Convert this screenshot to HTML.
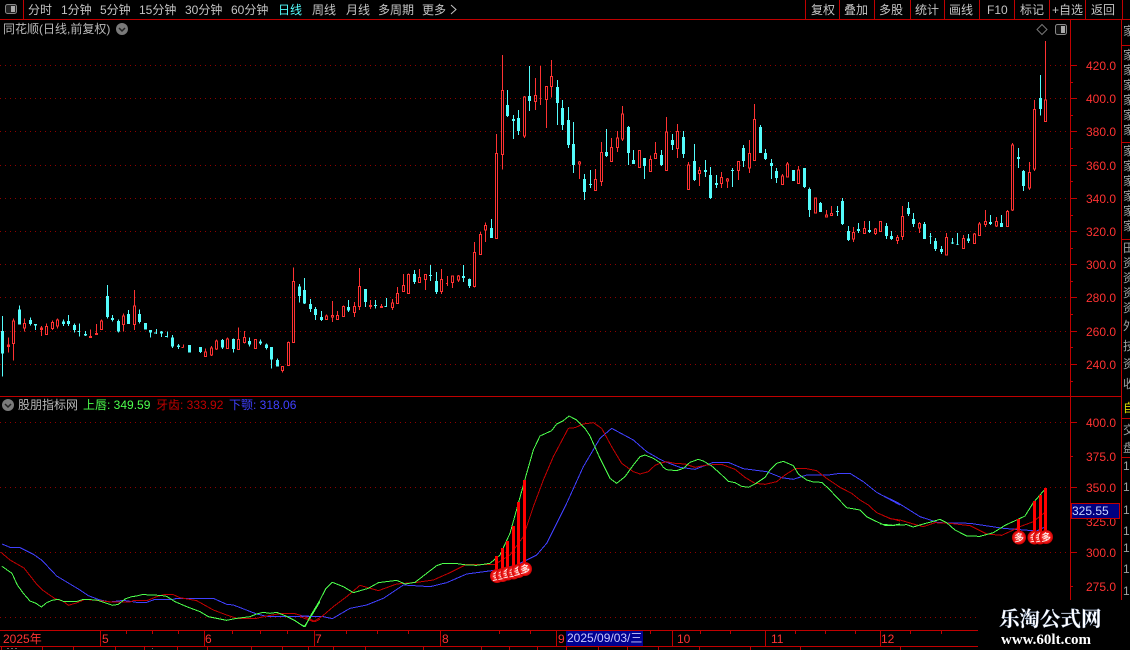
<!DOCTYPE html>
<html lang="zh"><head><meta charset="utf-8"><title>同花顺</title>
<style>
html,body{margin:0;padding:0;background:#000;width:1130px;height:650px;overflow:hidden}
svg{display:block}
text{font-family:"Liberation Sans","WenQuanYi Zen Hei","Noto Sans CJK SC",sans-serif;font-size:12px}
.t{fill:#c4c4c4}
.a{fill:#ff3232;text-anchor:end}
.m{fill:#ff3232}
.s{fill:#a0a0a0}
.k{fill:#fff;text-anchor:middle;font-size:10px}
</style></head><body>
<svg width="1130" height="650" viewBox="0 0 1130 650" xmlns="http://www.w3.org/2000/svg">
<defs><radialGradient id="g"><stop offset="0" stop-color="#ff9a8a"/><stop offset=".7" stop-color="#f01818"/><stop offset="1" stop-color="#c80000"/></radialGradient></defs>
<rect width="1130" height="650" fill="#000"/>

<!-- grid -->
<g stroke="#900000" stroke-width="1" stroke-dasharray="1 4" fill="none" shape-rendering="crispEdges">
<path d="M0 65.5H1068M0 98.5H1068M0 131.5H1068M0 165.5H1068M0 198.5H1068M0 231.5H1068M0 264.5H1068M0 297.5H1068M0 331.5H1068M0 364.5H1068"/>
<path d="M0 422.5H1068M0 487.5H1068M0 552.5H1068M0 617.5H978"/>
</g>

<!-- candles A -->
<g transform="translate(0,260) scale(.333333)" fill="none" shape-rendering="crispEdges">
<path stroke="#ff3232" stroke-width="3" d="M25 232V278M22 255h6v5h-6zM40 175V183M40 250V302M37 183h6V250h-6zM73 175V190M73 204V215M70 190h6V204h-6zM124 198V228M121 204h6v4h-6zM139 190V199M136 199h6V224h-6zM157 182V187M157 205V210M154 187h6V205h-6zM172 175V180M172 198V206M169 180h6V198h-6zM271 208V230M268 229h6v4h-6zM289 192V220M286 220h6v4h-6zM304 178V183M301 183h6V209h-6zM370 160V168M370 193V215M367 168h6V193h-6zM403 90V138M403 193V210M400 138h6V193h-6zM550 253V263M545 263h5M616 265V276M613 276h6V290h-6zM634 258V264M634 285V288M631 264h6V285h-6zM649 238V243M649 267V270M646 243h6V267h-6zM682 232V237M679 237h6V266h-6zM715 202V238M712 238h6V269h-6zM733 213V232M733 248V250M730 232h6V248h-6zM763 238h6V266h-6zM847 331V338M844 319h6V331h-6zM865 245V247M862 247h6V316h-6zM880 22V65M877 65h6V248h-6z"/>
<path stroke="#54fcfc" stroke-width="3" d="M7 168V350M58 136V194M91 172V196M106 192V210M190 178V198M205 165V198M223 190V218M238 190V230M256 213V228M322 75V176M337 165V184M355 178V218M385 150V192M418 148V190M451 210V232M469 207V222M484 213V231M502 215V232M517 225V264M535 252V267M601 261V279M667 237V267M700 235V278M748 232V260M781 238V255M799 250V269M814 261V326M832 295V320M898 72V128M232 214h6M462 219h7M495 230h7"/>
<path stroke="#54fcfc" stroke-width="9" d="M7 213V281M58 148V194M91 180V192M106 192V197M190 184V192M205 183V192M223 195V210M256 222V227M322 108V171M337 174V180M355 183V214M385 162V192M418 162V186M436 189V209M451 210V218M484 215V221M517 232V259M535 257V261M568 255V278M601 261V276M667 240V263M700 237V267M748 243V254M781 245V250M799 254V264M814 261V299M832 300V320M898 80V108"/>
</g>

<!-- candles B -->
<g transform="translate(280,200) scale(.333333)" fill="none" shape-rendering="crispEdges">
<path stroke="#ff3232" stroke-width="3" d="M139 343V348M136 348h6V359h-6zM157 303V346M157 351V366M154 346h6v5h-6zM172 333V346M169 346h6V359h-6zM190 316V319M187 319h6V350h-6zM223 306V319M223 338V351M220 319h6V338h-6zM238 204V259M238 320V330M235 259h6V320h-6zM271 300V316M271 320V327M268 316h6v4h-6zM304 312V319M301 319h6v4h-6zM337 297V309M337 323V330M334 309h6V323h-6zM352 261V280M349 280h6V311h-6zM370 222V256M367 256h6V275h-6zM385 220V223M382 223h6V281h-6zM418 207V232M415 232h6V248h-6zM436 239V270M433 223h6V239h-6zM484 207V238M484 275V282M481 238h6V275h-6zM502 228V258M498 250h4M517 248V264M514 228h6V248h-6zM535 225V228M535 240V246M532 228h6V240h-6zM583 126V157M583 260V263M580 157h6V260h-6zM601 96V103M598 103h6V164h-6zM616 67V76M616 90V126M613 76h6V90h-6z"/>
<path stroke="#54fcfc" stroke-width="3" d="M73 234V312M91 297V336M106 321V360M124 333V363M205 300V336M256 267V321M286 300V325M319 294V321M403 210V252M451 195V243M469 216V282M550 195V246M568 235V264M634 57V114M313 319h6"/>
<path stroke="#54fcfc" stroke-width="9" d="M73 270V310M91 312V327M106 327V345M124 351V360M205 321V331M256 267V306M286 315V318M403 222V246M451 225V228M469 243V276M550 228V234M568 237V258M634 84V114"/>
</g>

<!-- candles C -->
<g transform="translate(460,40) scale(.333333)" fill="none" shape-rendering="crispEdges">
<path stroke="#ff3232" stroke-width="3" d="M109 282V340M106 340h6V596h-6zM127 45V151M127 343V388M124 151h6V343h-6zM193 168V171M193 288V294M190 171h6V288h-6zM226 114V166M226 185V210M223 166h6V185h-6zM241 78V195M238 175h6M259 179V264M256 139h6V179h-6zM274 60V109M274 140V172M271 109h6V140h-6zM358 363V366M358 372V417M355 366h6v6h-6zM406 387V418M403 418h6V452h-6zM424 306V337M424 425V438M421 337h6V425h-6zM454 294V322M451 322h6V365h-6zM472 273V294M472 323V336M469 294h6V323h-6zM487 198V222M487 297V303M484 222h6V297h-6zM535 331h6V383h-6zM571 346V358M568 358h6V395h-6zM586 306V340M583 340h6V356h-6zM619 231V276M616 276h6V392h-6zM652 252V274M652 326V354M649 274h6V326h-6zM685 366V375M682 375h6V449h-6zM718 381V391M718 401V438M715 391h6V401h-6zM784 396V412M784 431V444M781 412h6V431h-6zM802 414V417M802 423V444M799 417h6v6h-6zM835 391V420M832 364h6V391h-6zM868 300V340M868 384V399M865 340h6V384h-6zM883 192V238M880 238h6V362h-6z"/>
<path stroke="#54fcfc" stroke-width="3" d="M142 150V231M160 225V297M175 210V285M208 78V213M292 120V255M307 180V270M325 201V324M340 246V399M373 402V480M391 390V444M439 267V351M505 258V375M520 330V372M553 354V417M604 330V378M637 282V330M670 273V354M703 312V423M736 360V411M751 381V477M769 405V444M817 384V441M850 315V381M901 255V339M916 327V360M934 357V417M949 384V429"/>
<path stroke="#54fcfc" stroke-width="9" d="M142 195V228M160 237V243M175 234V273M208 168V183M292 141V189M307 204V255M325 240V315M340 312V375M373 417V456M391 432V435M439 336V348M505 261V339M520 360V372M553 354V378M604 345V375M637 300V315M670 291V342M703 363V420M736 390V396M751 405V474M769 429V435M817 390V393M850 324V363M901 261V339M916 339V357M934 369V378M949 393V414"/>
</g>

<!-- candles D -->
<g transform="translate(780,90) scale(.333333)" fill="none" shape-rendering="crispEdges">
<path stroke="#ff3232" stroke-width="3" d="M7 252V258M4 258h6V284h-6zM22 216V222M19 222h6V261h-6zM55 228V240M52 240h6V281h-6zM103 324h6V369h-6zM139 360V375M136 375h6v6h-6zM154 348V370M151 370h6v6h-6zM220 411V427M220 447V456M217 427h6V447h-6zM253 393V415M253 430V432M250 415h6V430h-6zM286 414V417M286 431V435M283 417h6V431h-6zM298 394h6V424h-6zM352 435V442M352 451V462M349 442h6V451h-6zM367 348V379M367 440V450M364 379h6V440h-6zM418 396V400M418 414V429M415 400h6V414h-6zM499 429V442M496 442h6V495h-6zM550 435V445M547 445h6V476h-6zM583 429V432M580 432h6V461h-6zM598 396V402M595 402h6V437h-6zM616 360V394M616 404V411M613 394h6V404h-6zM649 381V394M649 408V411M646 394h6V408h-6zM682 360V364M679 364h6V410h-6zM697 159V165M697 360V363M694 165h6V360h-6zM748 216V247M748 294V300M745 247h6V294h-6zM763 30V58M763 237V243M760 58h6V237h-6zM796 -147V30M793 30h6V95h-6z"/>
<path stroke="#54fcfc" stroke-width="3" d="M40 240V273M73 234V294M88 292V381M121 336V366M172 348V378M187 324V405M205 408V453M235 399V429M268 393V429M319 399V447M334 423V450M385 336V378M400 369V411M433 396V447M451 429V462M466 444V483M484 468V492M517 444V462M532 429V465M565 432V459M631 375V405M664 375V411M715 174V234M730 240V303M781 -45V77"/>
<path stroke="#54fcfc" stroke-width="9" d="M40 240V273M73 234V291M88 297V360M121 339V366M172 363V366M187 333V402M205 423V450M235 417V423M268 420V426M319 408V438M334 438V447M385 354V372M400 387V402M433 402V447M451 439V441M466 453V477M484 477V486M517 457V461M532 462V464M565 445V453M631 396V402M664 399V411M715 201V207M730 243V288M781 24V57"/>
</g>

<!-- indicator lines -->
<g fill="none" stroke-width="3" shape-rendering="crispEdges" stroke-linejoin="round">
<g transform="translate(0,500) scale(.333333)">
<polyline stroke="#4040ff" points="6,132 30,142 60,143 100,163 125,180 170,228 200,246 235,267 265,287 300,300 330,306 370,301 410,307 440,307 465,298 520,298 530,295 640,295 680,313 700,315 770,342 800,349 900,349 960,349"/>
<polyline stroke="#c00000" points="3,157 30,180 72,204 108,250 130,272 165,296 190,304 205,316 232,308 255,298 300,302 335,306 390,306 400,302 440,302 470,290 495,283 520,284 540,293 590,302 640,330 680,345 710,355 770,355 800,348 840,341 885,341 915,350 945,365 960,358"/>
<polyline stroke="#4dff4d" points="6,199 36,220 52,255 70,280 90,303 108,310 124,321 140,308 156,301 175,298 190,304 232,304 250,298 290,300 320,310 338,316 355,313 375,297 395,290 410,288 430,283 445,285 480,286 500,289 525,305 560,320 600,335 625,350 650,355 680,361 710,355 750,350 770,342 790,337 810,340 830,337 855,347 885,362 912,380 930,355 945,330 960,305"/>
</g>
<g transform="translate(300,400) scale(.333333)">
<polyline stroke="#4040ff" points="0,648 70,650 97,656 150,625 200,615 250,595 310,555 390,560 440,548 500,522 590,510 650,495 710,465 740,430 800,310 850,200 900,115 935,85 1000,120 1040,155 1080,178"/>
<polyline stroke="#c00000" points="0,650 40,665 65,650 100,620 140,590 180,556 235,572 290,552 350,547 400,540 450,518 500,493 585,493 630,465 670,410 700,320 730,240 760,170 805,85 825,83 850,72 880,68 905,85 935,140 965,190 1000,215 1020,222 1045,215 1065,196 1080,190"/>
<polyline stroke="#4dff4d" points="0,672 15,680 30,650 60,600 78,565 97,547 130,560 160,578 205,565 235,548 290,541 315,552 345,547 380,520 410,497 430,490 465,490 500,495 530,496 570,490 600,465 630,400 655,310 680,220 700,150 720,108 755,92 770,72 790,62 807,48 830,60 855,85 870,108 900,175 930,235 950,250 975,230 1000,195 1020,170 1035,165 1060,175 1080,188"/>
</g>
<g transform="translate(640,430) scale(.333333)">
<polyline stroke="#4040ff" points="60,88 75,95 120,112 165,118 220,97 265,97 310,116 380,125 425,143 460,148 500,135 565,135 600,130 630,130 670,155 710,187 780,225"/>
<polyline stroke="#c00000" points="60,100 80,95 105,100 135,102 165,112 200,105 245,103 285,118 315,142 345,160 375,163 410,155 435,135 465,116 500,116 530,122 560,145 600,172 635,190 660,210 685,225 710,248 750,265 780,273"/>
<polyline stroke="#4dff4d" points="60,97 70,112 80,119 110,122 130,115 150,97 175,88 190,93 215,108 240,130 265,154 285,158 305,169 325,172 345,162 375,142 390,120 410,100 430,94 460,107 475,132 500,150 520,156 545,157 565,175 600,212 620,233 660,240 680,260 710,275 735,286 760,286 780,282"/>
</g>
<g transform="translate(880,380) scale(.333333)">
<polyline stroke="#4040ff" points="0,343 50,366 120,410 175,428 270,430 370,445 470,453 497,440"/>
<polyline stroke="#c00000" points="0,402 30,416 60,420 100,432 130,440 165,428 210,430 270,437 320,462 365,466 400,450 420,440 460,425 497,395"/>
<polyline stroke="#4dff4d" points="0,432 40,436 80,434 100,441 130,432 160,424 180,418 200,428 225,450 260,468 300,469 340,458 375,436 410,420 435,408 460,368 480,345 497,325"/>
</g>
</g>

<!-- signal bars -->
<path fill="none" stroke="#ff0000" stroke-width="3" shape-rendering="crispEdges" d="M496.5 556V576M502.5 548V575M507.5 541V573M513.5 526V572M518.5 502V570M524.5 480V569M1018.5 519V537M1034.5 501V537M1040.5 495V537M1045.5 488V537"/>
<circle cx="497" cy="576" r="7" fill="url(#g)"/><text class="k" x="497" y="580">多</text>
<circle cx="502.5" cy="575" r="7" fill="url(#g)"/><text class="k" x="502.5" y="579">多</text>
<circle cx="507.5" cy="573.5" r="7" fill="url(#g)"/><text class="k" x="507.5" y="577.5">多</text>
<circle cx="513.5" cy="572.5" r="7" fill="url(#g)"/><text class="k" x="513.5" y="576.5">多</text>
<circle cx="518.5" cy="571" r="7" fill="url(#g)"/><text class="k" x="518.5" y="575">多</text>
<circle cx="525" cy="569" r="7" fill="url(#g)"/><text class="k" x="525" y="573">多</text>
<circle cx="1019" cy="537.5" r="7" fill="url(#g)"/><text class="k" x="1019" y="541.5">多</text>
<circle cx="1034.5" cy="537.5" r="7" fill="url(#g)"/><text class="k" x="1034.5" y="541.5">多</text>
<circle cx="1040" cy="537.5" r="7" fill="url(#g)"/><text class="k" x="1040" y="541.5">多</text>
<circle cx="1046" cy="537" r="7" fill="url(#g)"/><text class="k" x="1046" y="541">多</text>

<!-- frame lines -->
<g stroke="#c00000" stroke-width="1" fill="none" shape-rendering="crispEdges">
<path d="M0 19.5H1130"/>
<path d="M23.5 0V19M805.5 0V19M839.5 0V19M874.5 0V19M910.5 0V19M944.5 0V19M979.5 0V19M1014.5 0V19M1049.5 0V19M1085.5 0V19M1122.5 0V19"/>
<path d="M0 396.5H1122M1070.5 20V600M1121.5 20V600"/>
<path d="M1122 45.5H1130M1122 142.5H1130M1122 239.5H1130M1122 418.5H1130M1122 457.5H1130"/>
<path d="M1070 65.5h7M1070 82.5h3M1070 98.5h7M1070 115.5h3M1070 131.5h7M1070 148.5h3M1070 165.5h7M1070 181.5h3M1070 198.5h7M1070 215.5h3M1070 231.5h7M1070 248.5h3M1070 264.5h7M1070 281.5h3M1070 297.5h7M1070 314.5h3M1070 331.5h7M1070 347.5h3M1070 364.5h7M1070 381.5h3"/>
<path d="M1070 422.5h7M1070 487.5h7M1070 552.5h7M1070 456.5h3M1070 586.5h3"/>
<path d="M0 630.5H978M0 646.5H978"/>
<path d="M100.5 630V646M204.5 630V646M314.5 630V646M440.5 630V646M556.5 630V646M672.5 630V646M765.5 630V646M880.5 630V646"/>
<path d="M126.5 631v3M152.5 631v3M178.5 631v3M232.5 631v3M260.5 631v3M287.5 631v3M346.5 631v3M377.5 631v3M408.5 631v3M499.5 631v3M530.5 631v3M650.5 631v3M700.5 631v3M730.5 631v3M795.5 631v3M825.5 631v3M855.5 631v3M910.5 631v3M941.5 631v3"/>
<path d="M1.5 647v3M42.5 647v3M73.5 647v3M115.5 647v3M144.5 647v3M177.5 647v3M207.5 647v3M251.5 647v3M282.5 647v3M308.5 647v3M333.5 647v3M365.5 647v3M423.5 647v3M481.5 647v3M509.5 647v3M537.5 647v3M566.5 647v3M598.5 647v3M627.5 647v3M658.5 647v3M699.5 647v3M750.5 647v3M800.5 647v3M900.5 647v3"/>
</g>

<!-- top bar -->
<rect x="5.5" y="4.5" width="11" height="9" rx="2" fill="#222" stroke="#888"/><rect x="11" y="6" width="4" height="6" fill="#aaa"/>
<text class="t" x="28" y="14">分时</text><text class="t" x="61" y="14">1分钟</text><text class="t" x="100" y="14">5分钟</text><text class="t" x="139" y="14">15分钟</text><text class="t" x="185" y="14">30分钟</text><text class="t" x="231" y="14">60分钟</text>
<text x="278" y="14" fill="#54fcfc">日线</text><text class="t" x="312" y="14">周线</text><text class="t" x="346" y="14">月线</text><text class="t" x="378" y="14">多周期</text><text class="t" x="422" y="14">更多</text>
<path d="M451 5l5 4.5-5 4.5" fill="none" stroke="#c4c4c4"/>
<text class="t" x="811" y="14">复权</text><text class="t" x="844" y="14">叠加</text><text class="t" x="879" y="14">多股</text><text class="t" x="915" y="14">统计</text><text class="t" x="949" y="14">画线</text><text class="t" x="987" y="14">F10</text><text class="t" x="1020" y="14">标记</text><text class="t" x="1052" y="14">+自选</text><text class="t" x="1091" y="14">返回</text>

<!-- header -->
<text fill="#b8b8b8" x="3" y="33">同花顺(日线,前复权)</text>
<circle cx="122" cy="29" r="6" fill="#7a7a7a"/><path d="M119 28l3 3 3-3" fill="none" stroke="#222" stroke-width="1.5"/>
<path d="M1042 24.5l5 5-5 5-5-5z" fill="none" stroke="#777"/>
<rect x="1055.5" y="24.5" width="11" height="10" rx="2" fill="#111" stroke="#888"/><rect x="1061" y="26" width="4" height="7" fill="#aaa"/>

<!-- indicator legend -->
<circle cx="8" cy="405" r="6" fill="#7a7a7a"/><path d="M5 404l3 3 3-3" fill="none" stroke="#222" stroke-width="1.5"/>
<text fill="#b8b8b8" x="18" y="409">股朋指标网</text>
<text fill="#4dff4d" x="83" y="409">上唇: 349.59</text>
<text fill="#c00000" x="156" y="409">牙齿: 333.92</text>
<text fill="#4040ff" x="229" y="409">下颚: 318.06</text>

<!-- y labels -->
<text class="a" x="1116" y="70">420.0</text><text class="a" x="1116" y="103">400.0</text><text class="a" x="1116" y="136">380.0</text><text class="a" x="1116" y="170">360.0</text><text class="a" x="1116" y="203">340.0</text><text class="a" x="1116" y="236">320.0</text><text class="a" x="1116" y="269">300.0</text><text class="a" x="1116" y="302">280.0</text><text class="a" x="1116" y="336">260.0</text><text class="a" x="1116" y="369">240.0</text>
<text class="a" x="1116" y="427">400.0</text><text class="a" x="1116" y="461">375.0</text><text class="a" x="1116" y="492">350.0</text><text class="a" x="1116" y="526">325.0</text><text class="a" x="1116" y="557">300.0</text><text class="a" x="1116" y="591">275.0</text>
<rect x="1071.5" y="503.5" width="48" height="15" fill="#000080" stroke="#c00000" stroke-width="1" shape-rendering="crispEdges"/>
<text x="1072" y="515" fill="#c8d4ff">325.55</text>

<!-- right strip -->
<text class="s" x="1123" y="35">家</text><text class="s" x="1123" y="59">家</text><text class="s" x="1123" y="74">家</text><text class="s" x="1123" y="89">家</text><text class="s" x="1123" y="104">家</text><text class="s" x="1123" y="119">家</text><text class="s" x="1123" y="134">家</text><text class="s" x="1123" y="155">家</text><text class="s" x="1123" y="170">家</text><text class="s" x="1123" y="185">家</text><text class="s" x="1123" y="200">家</text><text class="s" x="1123" y="215">家</text><text class="s" x="1123" y="230">家</text><text class="s" x="1123" y="252">田</text><text class="s" x="1123" y="267">资</text><text class="s" x="1123" y="282">资</text><text class="s" x="1123" y="297">资</text><text class="s" x="1123" y="312">资</text><text class="s" x="1123" y="330">外</text><text class="s" x="1123" y="350">技</text><text class="s" x="1123" y="368">资</text><text class="s" x="1123" y="388">收</text>
<text x="1123" y="412" fill="#d8d800">自</text><text class="s" x="1123" y="434">交</text><text class="s" x="1123" y="452">盘</text>
<text class="s" x="1123" y="470">1</text><text class="s" x="1123" y="491">1</text><text class="s" x="1123" y="514">1</text><text class="s" x="1123" y="535">1</text><text class="s" x="1123" y="552">1</text><text class="s" x="1123" y="573">1</text><text class="s" x="1123" y="595">1</text>

<!-- time axis -->
<text class="m" x="3" y="643">2025年</text><text class="m" x="102" y="643">5</text><text class="m" x="205" y="643">6</text><text class="m" x="315" y="643">7</text><text class="m" x="442" y="643">8</text><text class="m" x="558" y="643">9</text><text class="m" x="677" y="643">10</text><text class="m" x="771" y="643">11</text><text class="m" x="881" y="643">12</text>
<rect x="566" y="631" width="77" height="15" fill="#000090"/>
<text x="567" y="642" fill="#c8c8ff">2025/09/03/三</text>
<path d="M7 648.5h10M152 648.5h1" stroke="#666" stroke-width="1" stroke-dasharray="2 2" shape-rendering="crispEdges"/>

<!-- watermark -->
<rect x="978" y="600" width="152" height="50" fill="#000"/>
<text x="999" y="626" fill="#fff" stroke="#8fa4c8" stroke-width=".3" style="font-size:20.5px;font-weight:bold;font-family:'Liberation Serif','Noto Serif CJK SC',serif">乐淘公式网</text>
<text x="1001" y="644" fill="#fff" style="font-size:15px;font-weight:bold;font-family:'Liberation Serif',serif">www.60lt.com</text>
</svg>
</body></html>
